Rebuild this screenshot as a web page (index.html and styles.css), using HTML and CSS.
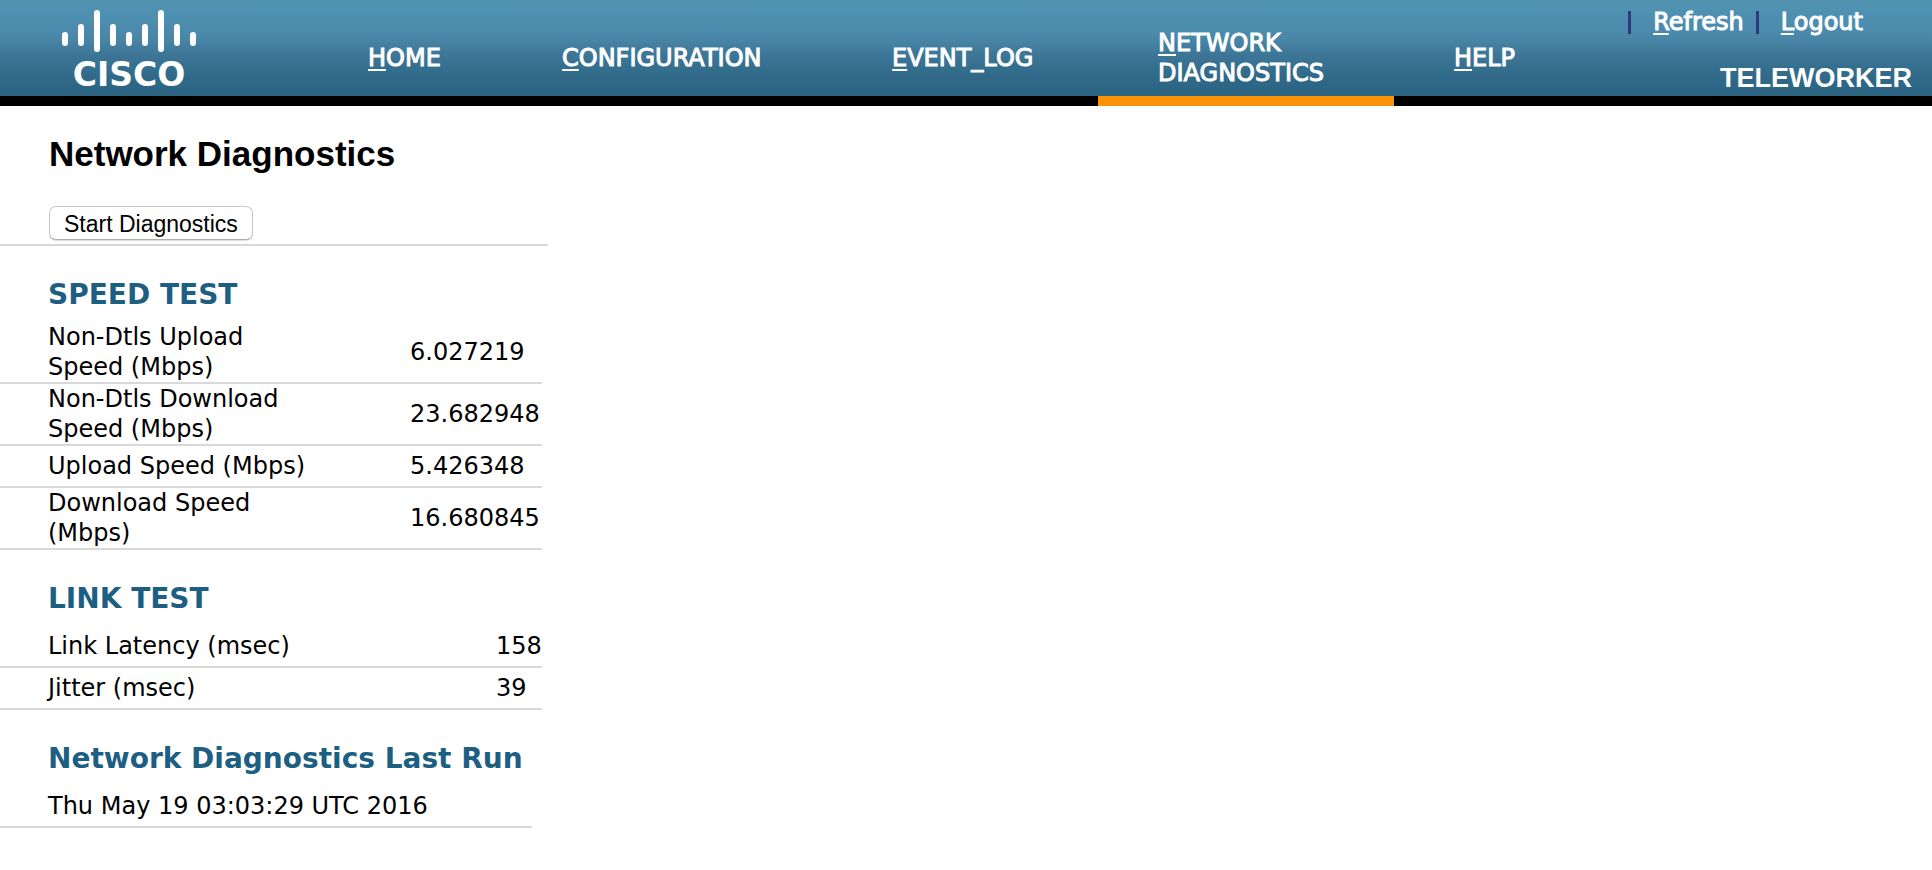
FILE: index.html
```html
<!DOCTYPE html>
<html lang="en">
<head>
<meta charset="utf-8">
<title>Network Diagnostics</title>
<link rel="stylesheet" href="styles.css">
</head>
<body>
<header class="header">
  <svg class="logo" viewBox="0 0 136 88" role="img" aria-label="Cisco">
    <g class="logo-bars">
      <path d="M4 27v8M20 19v16M36 5v36M52 19v16M68 27v8M84 19v16M100 5v36M116 19v16M132 27v8"/>
    </g>
    <text class="logo-text" x="68" y="78">CISCO</text>
  </svg>
  <nav class="nav">
    <a class="nav-item nav-home" href="#"><span><u>H</u>OME</span></a>
    <a class="nav-item nav-config" href="#"><span><u>C</u>ONFIGURATION</span></a>
    <a class="nav-item nav-log" href="#"><span><u>E</u>VENT_LOG</span></a>
    <a class="nav-item nav-diag active" href="#"><span><u>N</u>ETWORK<br>DIAGNOSTICS</span></a>
    <a class="nav-item" href="#"><span><u>H</u>ELP</span></a>
  </nav>
  <div class="account">
    <div class="actions">
      <a class="action" href="#"><span><u>R</u>efresh</span></a>
      <a class="action" href="#"><span><u>L</u>ogout</span></a>
    </div>
    <div class="product">TELEWORKER</div>
  </div>
</header>
<main>
  <section class="intro">
    <h1>Network Diagnostics</h1>
    <button class="start" type="button">Start Diagnostics</button>
  </section>
  <section class="panel">
    <h2>SPEED TEST</h2>
    <table class="speed">
      <tr><th scope="row">Non-Dtls Upload Speed (Mbps)</th><td>6.027219</td></tr>
      <tr><th scope="row">Non-Dtls Download Speed (Mbps)</th><td>23.682948</td></tr>
      <tr><th scope="row">Upload Speed (Mbps)</th><td>5.426348</td></tr>
      <tr><th scope="row">Download Speed (Mbps)</th><td>16.680845</td></tr>
    </table>
  </section>
  <section class="panel">
    <h2>LINK TEST</h2>
    <table class="link">
      <tr><th scope="row">Link Latency (msec)</th><td>158</td></tr>
      <tr><th scope="row">Jitter (msec)</th><td>39</td></tr>
    </table>
  </section>
  <section class="panel">
    <h2>Network Diagnostics Last Run</h2>
    <p class="last-run">Thu May 19 03:03:29 UTC 2016</p>
  </section>
</main>
</body>
</html>
```
FILE: styles.css
```css
* { box-sizing: border-box; }

body {
  margin: 0;
  background: #fff;
  color: #000;
  font: 24px/30px Verdana, "DejaVu Sans", sans-serif;
}

.header {
  display: flex;
  height: 106px;
  border-bottom: 10px solid #000;
  background: linear-gradient(#5293b0 0%, #4f91b2 12%, #4a88aa 38%, #3c7596 58%, #2f6987 82%, #2c6482 100%);
  color: #fff;
}

.logo {
  flex: none;
  width: 136px;
  height: 88px;
  margin: 8px 111px 0 61px;
}

.logo-bars {
  fill: none;
  stroke: #fff;
  stroke-width: 6;
  stroke-linecap: round;
}

.logo-text {
  fill: #fff;
  font: bold 33px "DejaVu Sans", sans-serif;
  text-anchor: middle;
}

a { color: inherit; text-decoration: none; }

u {
  text-decoration-thickness: 2px;
  text-underline-offset: 3px;
}

.nav { display: flex; flex: 1; }

.nav-item {
  display: flex;
  align-items: center;
  height: 106px;
  padding: 20px 0 0 60px;
  border-bottom: 10px solid transparent;
  -webkit-text-stroke: 1px #fff;
}

.nav-home { width: 194px; }
.nav-config { width: 330px; }
.nav-log { width: 266px; }
.nav-diag { width: 296px; }
.active { border-bottom-color: #fc9208; }

.account {
  display: flex;
  flex-direction: column;
  justify-content: space-between;
  align-items: flex-end;
  padding: 7px 20px 2px 0;
}

.actions {
  display: flex;
  gap: 12px;
  padding-right: 49px;
  -webkit-text-stroke: 1px #fff;
}

.action {
  display: flex;
  align-items: center;
}

.action::before {
  content: "";
  width: 3px;
  height: 23px;
  margin-right: 22px;
  background: #2b3c7c;
}

.product {
  font: bold 27px/32px Arial, "Liberation Sans", sans-serif;
}

.intro {
  width: 548px;
  height: 140px;
  padding: 28px 0 0 49px;
  border-bottom: 2px solid #d9d9d9;
}

h1 {
  margin: 0 0 32px;
  font: bold 35px/40px Arial, "Liberation Sans", sans-serif;
}

.start {
  display: block;
  height: 34px;
  padding: 2px 14px 0;
  border: 1px solid #c8c8c8;
  border-bottom-color: #adadad;
  border-radius: 7px;
  background: #fff;
  box-shadow: 0 1px 1px #ddd;
  color: #000;
  font: 23px/30px Helvetica, "Liberation Sans", sans-serif;
}

.panel { width: 542px; }

h2 {
  margin: 0;
  padding: 31px 0 9px 48px;
  color: #1c5f83;
  font-size: 28px;
  line-height: 36px;
  white-space: nowrap;
}

table {
  width: 100%;
  border-collapse: separate;
  border-spacing: 0;
  table-layout: fixed;
}

th, td {
  height: 42px;
  padding: 0;
  border-bottom: 2px solid #d9d9d9;
  font-weight: normal;
  text-align: left;
  vertical-align: middle;
}

th { padding-left: 48px; }

.speed th { width: 410px; padding-right: 84px; }
.link th { width: 496px; }

.last-run {
  width: 532px;
  margin: 0;
  padding: 5px 0 5px 48px;
  border-bottom: 2px solid #d9d9d9;
}
```
